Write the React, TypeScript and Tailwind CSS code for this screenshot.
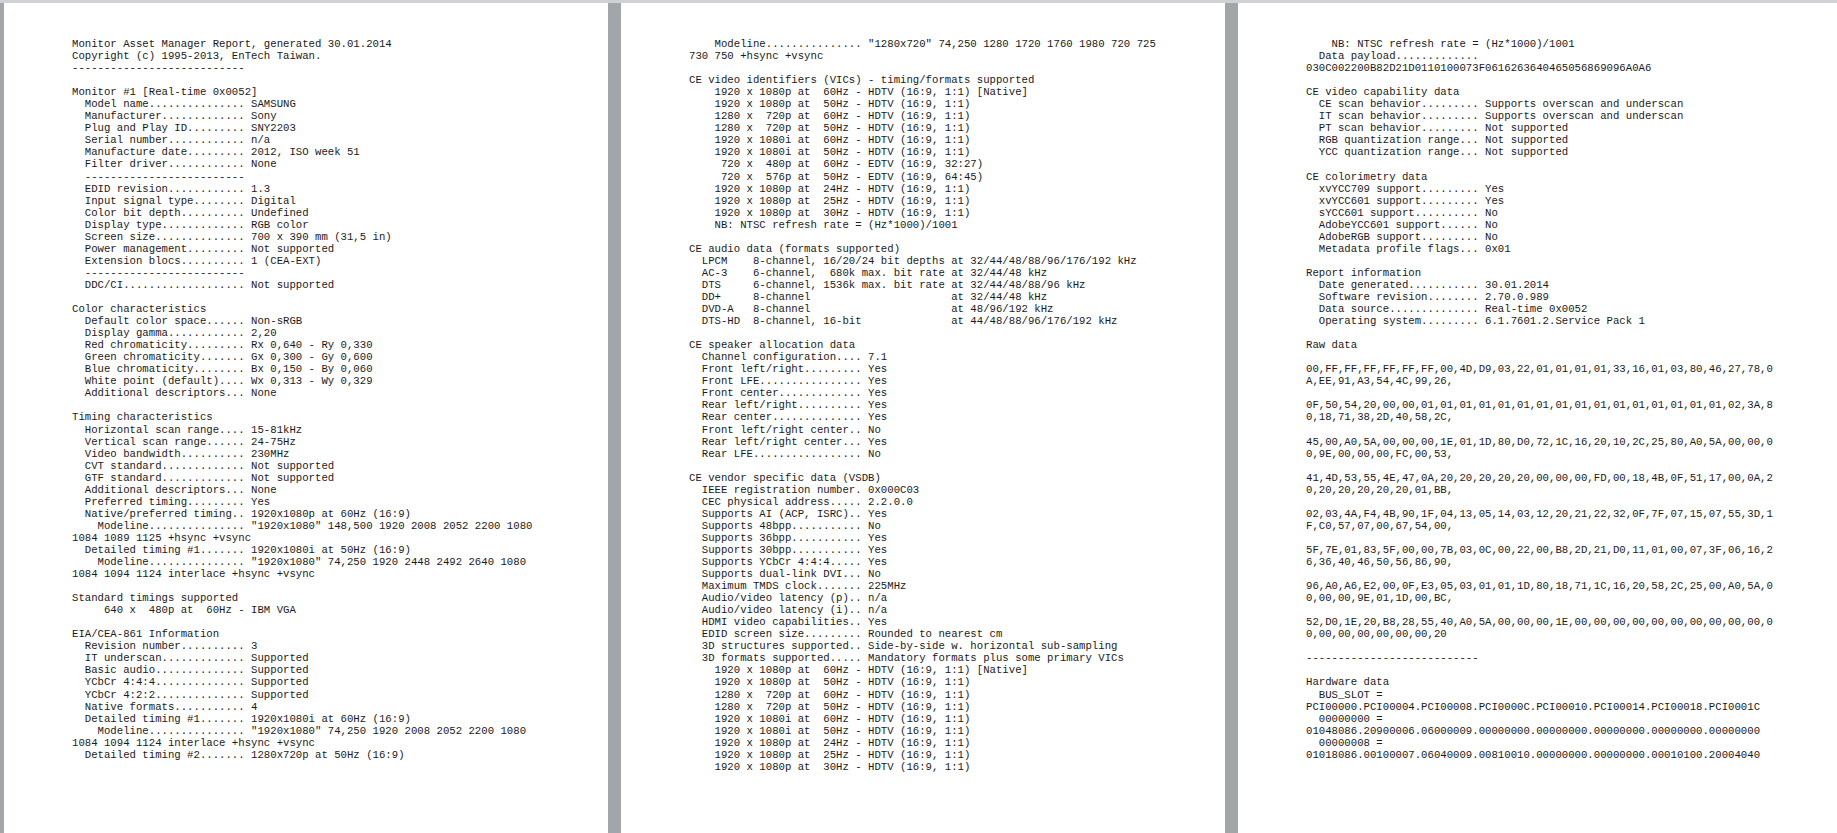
import React from 'react';

const DASHES = '---------------------------';
const SUB_DASHES = '  -------------------------';

// label, dots up to column 27, then the value
const f = (label: string, value: string, indent = 2) =>
  (' '.repeat(indent) + label).padEnd(27, '.') + ' ' + value;

const pageOne = [
  'Monitor Asset Manager Report, generated 30.01.2014',
  'Copyright (c) 1995-2013, EnTech Taiwan.',
  DASHES,
  '',
  'Monitor #1 [Real-time 0x0052]',
  f('Model name', 'SAMSUNG'),
  f('Manufacturer', 'Sony'),
  f('Plug and Play ID', 'SNY2203'),
  f('Serial number', 'n/a'),
  f('Manufacture date', '2012, ISO week 51'),
  f('Filter driver', 'None'),
  SUB_DASHES,
  f('EDID revision', '1.3'),
  f('Input signal type', 'Digital'),
  f('Color bit depth', 'Undefined'),
  f('Display type', 'RGB color'),
  f('Screen size', '700 x 390 mm (31,5 in)'),
  f('Power management', 'Not supported'),
  f('Extension blocs', '1 (CEA-EXT)'),
  SUB_DASHES,
  f('DDC/CI', 'Not supported'),
  '',
  'Color characteristics',
  f('Default color space', 'Non-sRGB'),
  f('Display gamma', '2,20'),
  f('Red chromaticity', 'Rx 0,640 - Ry 0,330'),
  f('Green chromaticity', 'Gx 0,300 - Gy 0,600'),
  f('Blue chromaticity', 'Bx 0,150 - By 0,060'),
  f('White point (default)', 'Wx 0,313 - Wy 0,329'),
  f('Additional descriptors', 'None'),
  '',
  'Timing characteristics',
  f('Horizontal scan range', '15-81kHz'),
  f('Vertical scan range', '24-75Hz'),
  f('Video bandwidth', '230MHz'),
  f('CVT standard', 'Not supported'),
  f('GTF standard', 'Not supported'),
  f('Additional descriptors', 'None'),
  f('Preferred timing', 'Yes'),
  f('Native/preferred timing', '1920x1080p at 60Hz (16:9)'),
  f('Modeline', '"1920x1080" 148,500 1920 2008 2052 2200 1080', 4),
  '1084 1089 1125 +hsync +vsync',
  f('Detailed timing #1', '1920x1080i at 50Hz (16:9)'),
  f('Modeline', '"1920x1080" 74,250 1920 2448 2492 2640 1080', 4),
  '1084 1094 1124 interlace +hsync +vsync',
  '',
  'Standard timings supported',
  '     640 x  480p at  60Hz - IBM VGA',
  '',
  'EIA/CEA-861 Information',
  f('Revision number', '3'),
  f('IT underscan', 'Supported'),
  f('Basic audio', 'Supported'),
  f('YCbCr 4:4:4', 'Supported'),
  f('YCbCr 4:2:2', 'Supported'),
  f('Native formats', '4'),
  f('Detailed timing #1', '1920x1080i at 60Hz (16:9)'),
  f('Modeline', '"1920x1080" 74,250 1920 2008 2052 2200 1080', 4),
  '1084 1094 1124 interlace +hsync +vsync',
  f('Detailed timing #2', '1280x720p at 50Hz (16:9)'),
];

const pageTwo = [
  f('Modeline', '"1280x720" 74,250 1280 1720 1760 1980 720 725', 4),
  '730 750 +hsync +vsync',
  '',
  'CE video identifiers (VICs) - timing/formats supported',
  '    1920 x 1080p at  60Hz - HDTV (16:9, 1:1) [Native]',
  '    1920 x 1080p at  50Hz - HDTV (16:9, 1:1)',
  '    1280 x  720p at  60Hz - HDTV (16:9, 1:1)',
  '    1280 x  720p at  50Hz - HDTV (16:9, 1:1)',
  '    1920 x 1080i at  60Hz - HDTV (16:9, 1:1)',
  '    1920 x 1080i at  50Hz - HDTV (16:9, 1:1)',
  '     720 x  480p at  60Hz - EDTV (16:9, 32:27)',
  '     720 x  576p at  50Hz - EDTV (16:9, 64:45)',
  '    1920 x 1080p at  24Hz - HDTV (16:9, 1:1)',
  '    1920 x 1080p at  25Hz - HDTV (16:9, 1:1)',
  '    1920 x 1080p at  30Hz - HDTV (16:9, 1:1)',
  '    NB: NTSC refresh rate = (Hz*1000)/1001',
  '',
  'CE audio data (formats supported)',
  '  LPCM    8-channel, 16/20/24 bit depths at 32/44/48/88/96/176/192 kHz',
  '  AC-3    6-channel,  680k max. bit rate at 32/44/48 kHz',
  '  DTS     6-channel, 1536k max. bit rate at 32/44/48/88/96 kHz',
  '  DD+     8-channel                      at 32/44/48 kHz',
  '  DVD-A   8-channel                      at 48/96/192 kHz',
  '  DTS-HD  8-channel, 16-bit              at 44/48/88/96/176/192 kHz',
  '',
  'CE speaker allocation data',
  f('Channel configuration', '7.1'),
  f('Front left/right', 'Yes'),
  f('Front LFE', 'Yes'),
  f('Front center', 'Yes'),
  f('Rear left/right', 'Yes'),
  f('Rear center', 'Yes'),
  f('Front left/right center', 'No'),
  f('Rear left/right center', 'Yes'),
  f('Rear LFE', 'No'),
  '',
  'CE vendor specific data (VSDB)',
  f('IEEE registration number', '0x000C03'),
  f('CEC physical address', '2.2.0.0'),
  f('Supports AI (ACP, ISRC)', 'Yes'),
  f('Supports 48bpp', 'No'),
  f('Supports 36bpp', 'Yes'),
  f('Supports 30bpp', 'Yes'),
  f('Supports YCbCr 4:4:4', 'Yes'),
  f('Supports dual-link DVI', 'No'),
  f('Maximum TMDS clock', '225MHz'),
  f('Audio/video latency (p)', 'n/a'),
  f('Audio/video latency (i)', 'n/a'),
  f('HDMI video capabilities', 'Yes'),
  f('EDID screen size', 'Rounded to nearest cm'),
  f('3D structures supported', 'Side-by-side w. horizontal sub-sampling'),
  f('3D formats supported', 'Mandatory formats plus some primary VICs'),
  '    1920 x 1080p at  60Hz - HDTV (16:9, 1:1) [Native]',
  '    1920 x 1080p at  50Hz - HDTV (16:9, 1:1)',
  '    1280 x  720p at  60Hz - HDTV (16:9, 1:1)',
  '    1280 x  720p at  50Hz - HDTV (16:9, 1:1)',
  '    1920 x 1080i at  60Hz - HDTV (16:9, 1:1)',
  '    1920 x 1080i at  50Hz - HDTV (16:9, 1:1)',
  '    1920 x 1080p at  24Hz - HDTV (16:9, 1:1)',
  '    1920 x 1080p at  25Hz - HDTV (16:9, 1:1)',
  '    1920 x 1080p at  30Hz - HDTV (16:9, 1:1)',
];

const pageThree = [
  '    NB: NTSC refresh rate = (Hz*1000)/1001',
  '  Data payload.............',
  '030C002200B82D21D0110100073F0616263640465056869096A0A6',
  '',
  'CE video capability data',
  f('CE scan behavior', 'Supports overscan and underscan'),
  f('IT scan behavior', 'Supports overscan and underscan'),
  f('PT scan behavior', 'Not supported'),
  f('RGB quantization range', 'Not supported'),
  f('YCC quantization range', 'Not supported'),
  '',
  'CE colorimetry data',
  f('xvYCC709 support', 'Yes'),
  f('xvYCC601 support', 'Yes'),
  f('sYCC601 support', 'No'),
  f('AdobeYCC601 support', 'No'),
  f('AdobeRGB support', 'No'),
  f('Metadata profile flags', '0x01'),
  '',
  'Report information',
  f('Date generated', '30.01.2014'),
  f('Software revision', '2.70.0.989'),
  f('Data source', 'Real-time 0x0052'),
  f('Operating system', '6.1.7601.2.Service Pack 1'),
  '',
  'Raw data',
  '',
  '00,FF,FF,FF,FF,FF,FF,00,4D,D9,03,22,01,01,01,01,33,16,01,03,80,46,27,78,0',
  'A,EE,91,A3,54,4C,99,26,',
  '',
  '0F,50,54,20,00,00,01,01,01,01,01,01,01,01,01,01,01,01,01,01,01,01,02,3A,8',
  '0,18,71,38,2D,40,58,2C,',
  '',
  '45,00,A0,5A,00,00,00,1E,01,1D,80,D0,72,1C,16,20,10,2C,25,80,A0,5A,00,00,0',
  '0,9E,00,00,00,FC,00,53,',
  '',
  '41,4D,53,55,4E,47,0A,20,20,20,20,20,00,00,00,FD,00,18,4B,0F,51,17,00,0A,2',
  '0,20,20,20,20,20,01,BB,',
  '',
  '02,03,4A,F4,4B,90,1F,04,13,05,14,03,12,20,21,22,32,0F,7F,07,15,07,55,3D,1',
  'F,C0,57,07,00,67,54,00,',
  '',
  '5F,7E,01,83,5F,00,00,7B,03,0C,00,22,00,B8,2D,21,D0,11,01,00,07,3F,06,16,2',
  '6,36,40,46,50,56,86,90,',
  '',
  '96,A0,A6,E2,00,0F,E3,05,03,01,01,1D,80,18,71,1C,16,20,58,2C,25,00,A0,5A,0',
  '0,00,00,9E,01,1D,00,BC,',
  '',
  '52,D0,1E,20,B8,28,55,40,A0,5A,00,00,00,1E,00,00,00,00,00,00,00,00,00,00,0',
  '0,00,00,00,00,00,00,20',
  '',
  DASHES,
  '',
  'Hardware data',
  '  BUS_SLOT =',
  'PCI00000.PCI00004.PCI00008.PCI0000C.PCI00010.PCI00014.PCI00018.PCI0001C',
  '  00000000 =',
  '01048086.20900006.06000009.00000000.00000000.00000000.00000000.00000000',
  '  00000008 =',
  '01018086.00100007.06040009.00810010.00000000.00000000.00010100.20004040',
];

const Page: React.FC<{ lines: string[]; className: string }> = ({ lines, className }) => (
  <div className={`bg-white h-full overflow-hidden pt-[35px] pl-[68px] ${className}`}>
    <pre className="font-['Liberation_Mono',monospace] text-[10.67px] leading-[12.05px] text-[#1a1a1a] whitespace-pre">
      {lines.join('\n')}
    </pre>
  </div>
);

const Gutter: React.FC<{ className: string }> = ({ className }) => (
  <div className={`h-full shrink-0 bg-[#a3a6a9] ${className}`} />
);

export default function App() {
  return (
    <div className="w-full h-screen overflow-hidden flex flex-col bg-[#cfd1d6]">
      <div className="h-[3px] shrink-0" />
      <div className="flex-1 min-h-0 flex">
        <Gutter className="w-[4px]" />
        <Page lines={pageOne} className="w-[604px] shrink-0" />
        <Gutter className="w-[13px]" />
        <Page lines={pageTwo} className="w-[604px] shrink-0" />
        <Gutter className="w-[13px]" />
        <Page lines={pageThree} className="flex-1" />
      </div>
    </div>
  );
}
